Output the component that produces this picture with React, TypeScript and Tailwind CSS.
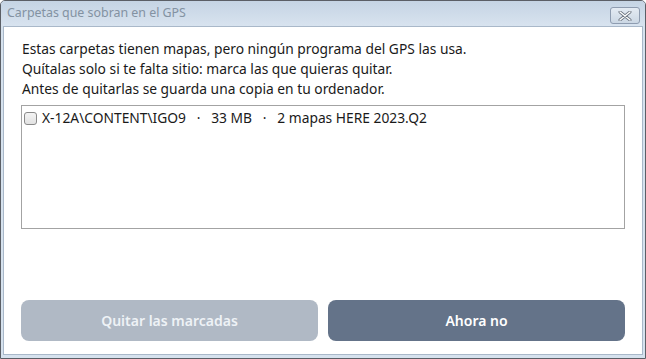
export default function App() {
  return (
    <div className="w-[646px] h-[359px] flex flex-col bg-[#d6e2ee] border border-[#5b5f66] rounded-t-[5px] overflow-hidden font-['Noto_Sans',sans-serif]">
      <div className="h-[25px] shrink-0 flex items-center justify-between pl-[6px] pr-[5px] bg-gradient-to-b from-[#c5d4e4] to-[#d8e3ef]">
        <span className="text-[12.4px] text-[#8392a2] leading-none">Carpetas que sobran en el GPS</span>
        <div className="w-[30px] h-[17px] mt-[4px] rounded-[3px] border border-[#8e9cb0] bg-gradient-to-b from-[#e4ebf3] to-[#cbd7e4] flex items-center justify-center">
          <svg width="14" height="10" viewBox="0 0 14 10">
            <path d="M2 1 L12 9 M12 1 L2 9" stroke="#6b7480" strokeWidth="3" strokeLinecap="round" />
            <path d="M2 1 L12 9 M12 1 L2 9" stroke="#ffffff" strokeWidth="1.4" strokeLinecap="round" />
          </svg>
        </div>
      </div>
      <div className="flex-1 mx-[2px] mb-[3px] bg-white border border-[#a9b8c9] flex flex-col px-[17px] pt-[12px] pb-[13px]">
        <div className="text-[13.8px] leading-[20px] text-[#1a1a1a] pl-[1px]">
          <p>Estas carpetas tienen mapas, pero ningún programa del GPS las usa.</p>
          <p>Quítalas solo si te falta sitio: marca las que quieras quitar.</p>
          <p>Antes de quitarlas se guarda una copia en tu ordenador.</p>
        </div>
        <div className="mt-[6px] h-[124px] border border-[#a3a3a3] px-[2px] pt-[3px]">
          <label className="flex items-center gap-[5px] text-[13.8px] text-[#1a1a1a] leading-[18px]">
            <span className="w-[13px] h-[13px] rounded-[3px] border border-[#8a8a8a] bg-gradient-to-b from-[#f4f4f4] to-[#e2e2e2] shrink-0" />
            <span className="whitespace-pre">X-12A\CONTENT\IGO9   ·   33 MB   ·   2 mapas HERE 2023.Q2</span>
          </label>
        </div>
        <div className="mt-auto grid grid-cols-2 gap-[10px]">
          <button className="h-[41px] rounded-[8px] bg-[#b0b9c5] text-[#eef2f6] text-[14px] font-semibold">
            Quitar las marcadas
          </button>
          <button className="h-[41px] rounded-[8px] bg-[#647389] text-white text-[14px] font-semibold">
            Ahora no
          </button>
        </div>
      </div>
    </div>
  );
}
